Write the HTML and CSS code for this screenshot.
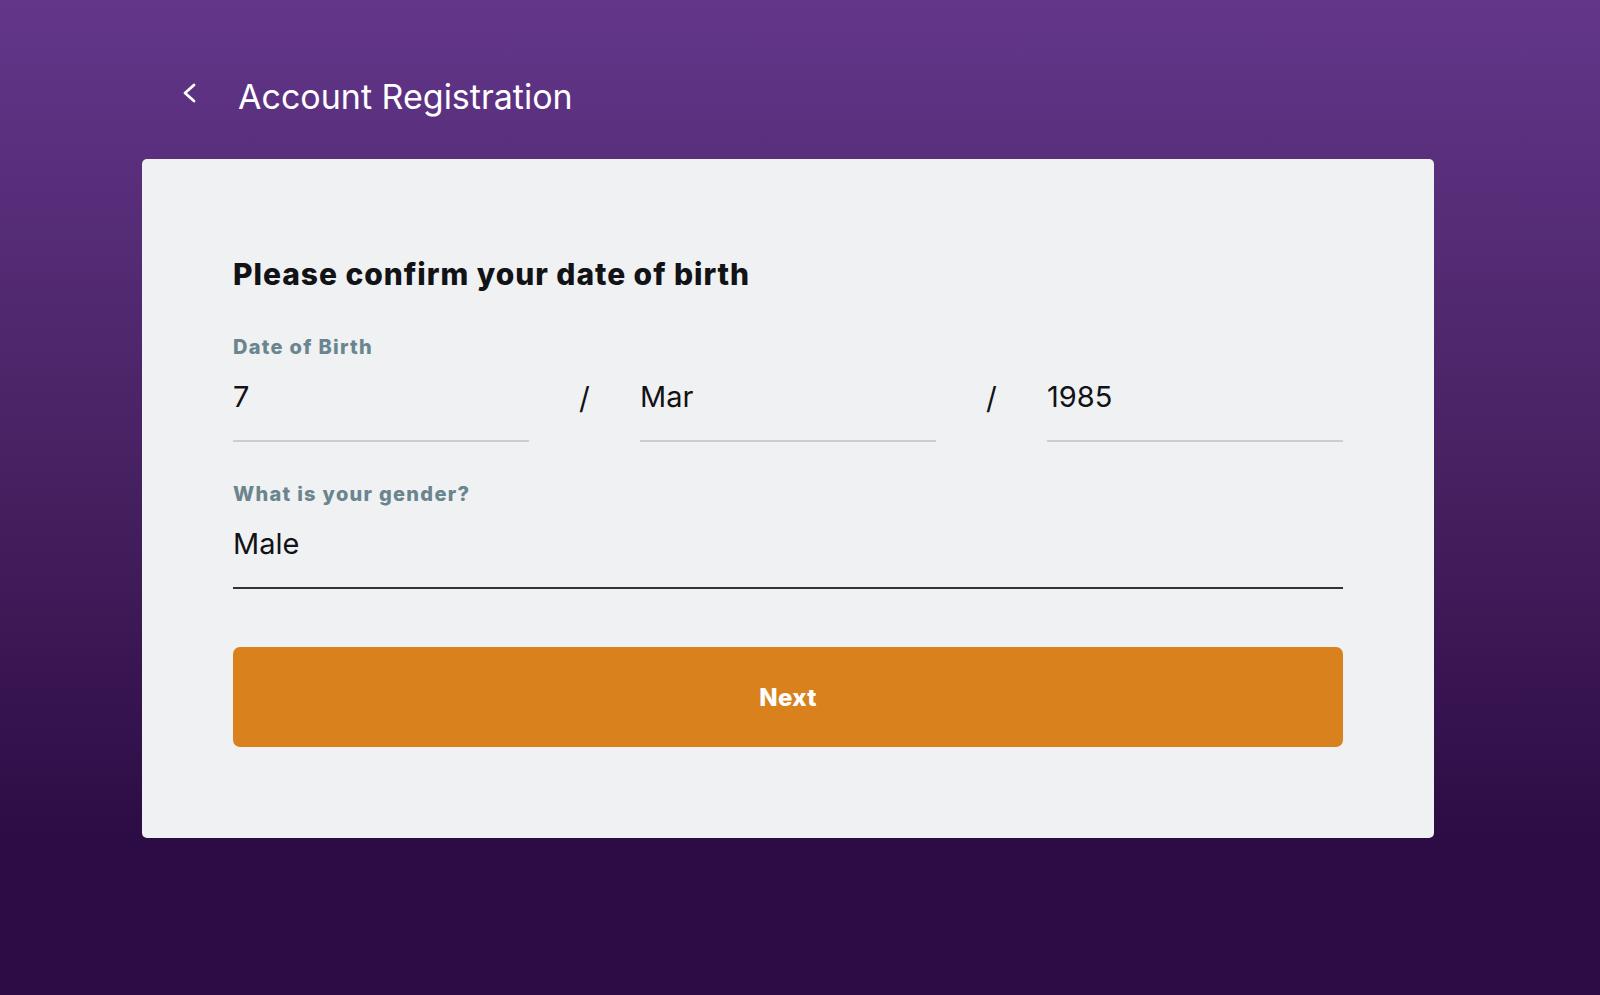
FILE: index.html
```html
<!DOCTYPE html>
<html lang="en">
<head>
<meta charset="utf-8">
<title>Account Registration</title>
<link rel="stylesheet" href="styles.css">
</head>
<body>
<header class="topbar">
  <button class="back" aria-label="Back">
    <svg width="14" height="20" viewBox="0 0 14 20"><path d="M12 2 L3 10 L12 18" fill="none" stroke="#ffffff" stroke-width="2.8" stroke-linecap="round" stroke-linejoin="round"/></svg>
  </button>
  <h1 class="title">Account Registration</h1>
</header>
<main class="card">
  <h2 class="heading">Please confirm your date of birth</h2>
  <div class="group">
    <div class="label">Date of Birth</div>
    <div class="dob">
      <div class="field">7</div>
      <div class="sep">/</div>
      <div class="field">Mar</div>
      <div class="sep">/</div>
      <div class="field">1985</div>
    </div>
  </div>
  <div class="group">
    <div class="label">What is your gender?</div>
    <div class="field active">Male</div>
  </div>
  <button class="next">Next</button>
</main>
</body>
</html>
```
FILE: styles.css
```css
* { box-sizing: border-box; }
html, body { margin: 0; padding: 0; }
body {
  min-height: 995px;
  background: linear-gradient(180deg, #63368a 0%, #45205f 50%, #2d0c45 84%, #2d0c45 100%);
  font-family: "Inter", "Liberation Sans", sans-serif;
  overflow: hidden;
}
.topbar {
  display: flex;
  align-items: center;
  padding: 75px 0 0 182px;
  height: 119px;
}
.back {
  background: none;
  border: 0;
  padding: 0;
  width: 14px;
  height: 20px;
  display: flex;
  margin-right: 42px;
  margin-top: -9px;
  cursor: pointer;
}
.title {
  margin: 0;
  font-size: 34px;
  line-height: 44px;
  font-weight: 400;
  color: #ffffff;
}
.card {
  margin: 40px 0 0 142px;
  width: 1292px;
  background: #f0f1f3;
  border-radius: 5px;
  padding: 97px 91px 91px;
}
.heading {
  margin: 0 0 43px;
  font-family: "Inter", sans-serif;
  font-weight: 800;
  font-size: 30px;
  line-height: 36px;
  letter-spacing: 0.95px;
  color: #111316;
}
.label {
  font-family: "Inter", sans-serif;
  font-weight: 800;
  font-size: 20px;
  line-height: 24px;
  letter-spacing: 1.3px;
  color: #6a858e;
  margin-bottom: 20px;
}
.group + .group { margin-top: 40px; }
.dob {
  display: grid;
  grid-template-columns: 1fr 111px 1fr 111px 1fr;
}
.field {
  font-size: 29px;
  line-height: 36px;
  color: #111316;
  padding-bottom: 25px;
  border-bottom: 2px solid #c6cfd3;
}
.field.active { border-bottom-color: #333336; }
.sep {
  font-size: 30px;
  line-height: 36px;
  color: #111316;
  text-align: center;
  padding-top: 1px;
}
.next {
  display: block;
  width: 100%;
  height: 100px;
  margin-top: 58px;
  border: 0;
  border-radius: 7px;
  background: #d9821d;
  color: #ffffff;
  font-family: "Inter", sans-serif;
  font-weight: 800;
  font-size: 24px;
  letter-spacing: 0.3px;
  cursor: pointer;
}
```
